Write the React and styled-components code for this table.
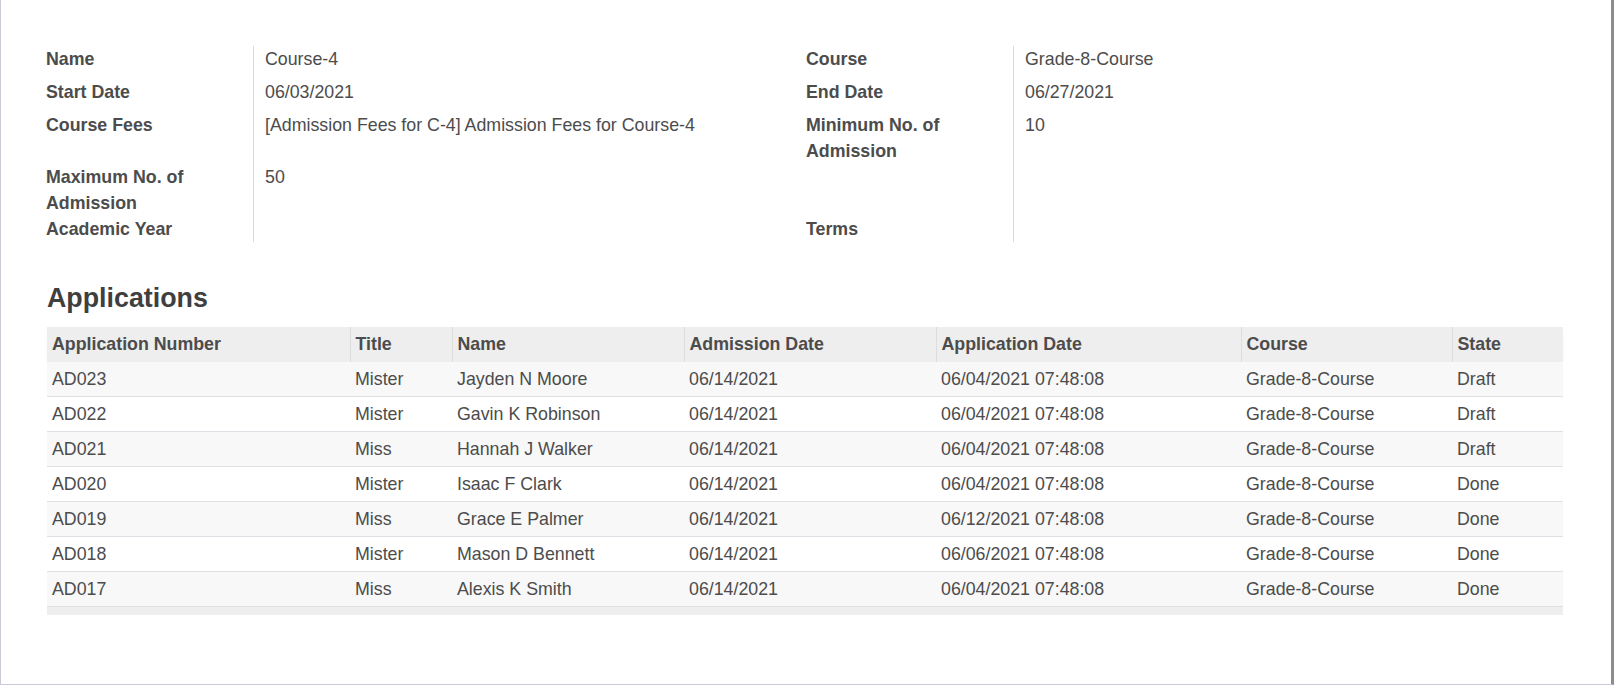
import styled, { createGlobalStyle } from 'styled-components'

const GlobalStyle = createGlobalStyle`
    html, body {
        margin: 0;
        padding: 0;
        background: #ffffff;
    }
    body {
        font-family: "Liberation Sans", Arial, sans-serif;
        color: #4c4c4c;
    }
`

const fields = [
    [
        { label: 'Name', value: 'Course-4' },
        { label: 'Course', value: 'Grade-8-Course' },
    ],
    [
        { label: 'Start Date', value: '06/03/2021' },
        { label: 'End Date', value: '06/27/2021' },
    ],
    [
        { label: 'Course Fees', value: '[Admission Fees for C-4] Admission Fees for Course-4' },
        { label: 'Minimum No. of Admission', value: '10' },
    ],
    [
        { label: 'Maximum No. of Admission', value: '50' },
        { label: '', value: '' },
    ],
    [
        { label: 'Academic Year', value: '' },
        { label: 'Terms', value: '' },
    ],
]

const columns = [
    { title: 'Application Number', width: 303 },
    { title: 'Title', width: 102 },
    { title: 'Name', width: 232 },
    { title: 'Admission Date', width: 252 },
    { title: 'Application Date', width: 305 },
    { title: 'Course', width: 211 },
    { title: 'State', width: 111 },
]

const applications = [
    ['AD023', 'Mister', 'Jayden N Moore', '06/14/2021', '06/04/2021 07:48:08', 'Grade-8-Course', 'Draft'],
    ['AD022', 'Mister', 'Gavin K Robinson', '06/14/2021', '06/04/2021 07:48:08', 'Grade-8-Course', 'Draft'],
    ['AD021', 'Miss', 'Hannah J Walker', '06/14/2021', '06/04/2021 07:48:08', 'Grade-8-Course', 'Draft'],
    ['AD020', 'Mister', 'Isaac F Clark', '06/14/2021', '06/04/2021 07:48:08', 'Grade-8-Course', 'Done'],
    ['AD019', 'Miss', 'Grace E Palmer', '06/14/2021', '06/12/2021 07:48:08', 'Grade-8-Course', 'Done'],
    ['AD018', 'Mister', 'Mason D Bennett', '06/14/2021', '06/06/2021 07:48:08', 'Grade-8-Course', 'Done'],
    ['AD017', 'Miss', 'Alexis K Smith', '06/14/2021', '06/04/2021 07:48:08', 'Grade-8-Course', 'Done'],
]

function App() {
    return (
        <>
            <GlobalStyle />
            <Sheet>
                <FieldGrid>
                    {fields.map((row, i) =>
                        row.map((f, j) => [
                            <FieldLabel key={`l${i}${j}`}>{f.label}</FieldLabel>,
                            <FieldValue key={`v${i}${j}`} filled={f.value !== ''}>
                                {f.value}
                            </FieldValue>,
                        ])
                    )}
                </FieldGrid>

                <SectionTitle>Applications</SectionTitle>

                <ListTable>
                    <colgroup>
                        {columns.map((c) => (
                            <col key={c.title} style={{ width: c.width }} />
                        ))}
                    </colgroup>
                    <thead>
                        <tr>
                            {columns.map((c) => (
                                <HeadCell key={c.title}>{c.title}</HeadCell>
                            ))}
                        </tr>
                    </thead>
                    <tbody>
                        {applications.map((row) => (
                            <Row key={row[0]}>
                                {row.map((cell, k) => (
                                    <Cell key={k}>{cell}</Cell>
                                ))}
                            </Row>
                        ))}
                    </tbody>
                    <tfoot>
                        <tr>
                            <FootCell colSpan={columns.length} />
                        </tr>
                    </tfoot>
                </ListTable>
            </Sheet>
        </>
    )
}

const Sheet = styled.div`
    box-sizing: border-box;
    height: 685px;
    width: 1614px;
    padding: 46px 48px 0 46px;
    border-left: 1px solid #cbc8d8;
    border-bottom: 1px solid #cbc8d8;
    border-right: 3px solid #8d8d8d;
    background: #ffffff;
`

const FieldGrid = styled.div`
    display: grid;
    grid-template-columns: 208px 552px 208px 1fr;
    margin-left: -1px;
    font-size: 17.8px;
    line-height: 26px;
`

const FieldLabel = styled.div`
    box-sizing: border-box;
    font-weight: bold;
    border-right: 1px solid #d9d9d9;
    padding-right: 8px;
    color: #4c4c4c;
`

const FieldValue = styled.div`
    padding-left: 11px;
    min-height: ${(p) => (p.filled ? '33px' : '0')};
    color: #4c4c4c;
`

const SectionTitle = styled.h3`
    margin: 41px 0 13px 0;
    font-size: 26.8px;
    line-height: 31px;
    font-weight: bold;
    color: #3f3f3f;
`

const ListTable = styled.table`
    width: 1516px;
    table-layout: fixed;
    border-collapse: collapse;
    font-size: 17.8px;
    color: #4c4c4c;

    thead {
        box-shadow: 0 3px 6px -3px rgba(0, 0, 0, 0.12);
    }
`

const HeadCell = styled.th`
    height: 35px;
    padding: 0 5px;
    background: #eeeeee;
    text-align: left;
    font-weight: bold;
    white-space: nowrap;
    border-left: 1px solid #dddddd;

    &:first-child {
        border-left: none;
    }
`

const Row = styled.tr`
    background: #ffffff;
    border-top: 1px solid #dee0e6;

    &:nth-child(odd) {
        background: #f8f8f8;
    }
    &:first-child {
        border-top: none;
    }
`

const Cell = styled.td`
    height: 34px;
    padding: 0 5px;
    white-space: nowrap;
`

const FootCell = styled.td`
    height: 8px;
    padding: 0;
    background: #eeeeee;
    border-top: 1px solid #dee0e6;
`

export default App
